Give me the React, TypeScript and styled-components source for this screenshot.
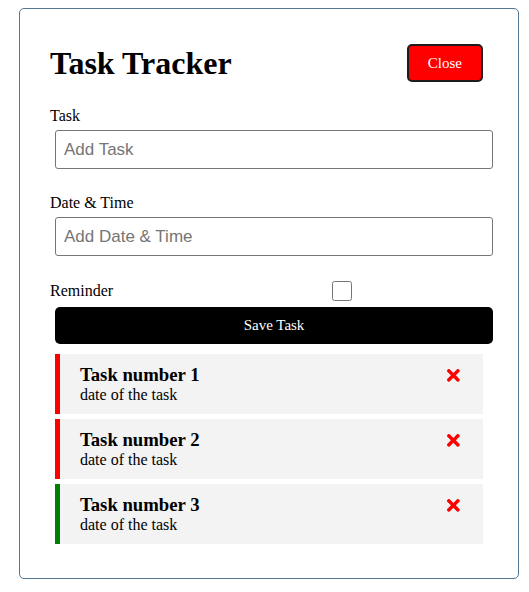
import { FC } from 'react'
import styled, { createGlobalStyle } from 'styled-components'
import { FaTimes } from 'react-icons/fa'

const GlobalStyle = createGlobalStyle`
    * {
        box-sizing: border-box;
        margin: 0;
        padding: 0;
    }

    body {
        font-family: "Liberation Serif", "Times New Roman", serif;
        color: #000;
        background: #fff;
    }
`;

const Container = styled.div`
    width: 500px;
    margin: 8px 0 0 19px;
    padding: 30px 30px 29px;
    border: 1px solid #557994;
    border-radius: 5px;
`;

const Header = styled.header`
    display: flex;
    justify-content: space-between;
    align-items: center;
    margin-bottom: 20px;
`;

const Title = styled.h1`
    font-size: 32px;
    font-weight: bold;
`;

const Button = styled.button<{ $color: string; $block?: boolean }>`
    display: ${({ $block }) => ($block ? 'block' : 'inline-block')};
    width: ${({ $block }) => ($block ? '100%' : 'auto')};
    height: ${({ $block }) => ($block ? '37px' : '38px')};
    margin: ${({ $block }) => ($block ? '6px 5px 5px' : '5px')};
    padding: 0 19px;
    background: ${({ $color }) => $color};
    color: #fff;
    border: ${({ $block }) => ($block ? 'none' : '2px solid #1c1c1c')};
    border-radius: 5px;
    font-family: inherit;
    font-size: 15px;
    cursor: pointer;
`;

const Form = styled.form`
    margin-bottom: 10px;
`;

const FormControl = styled.div`
    display: flex;
    flex-direction: column;
    margin: 20px 0;

    label {
        font-size: 16px;
        line-height: 18px;
    }
`;

const TextInput = styled.input`
    width: 100%;
    height: 39px;
    margin: 5px;
    padding: 3px 8px;
    border: 1px solid #767676;
    border-radius: 3px;
    font-family: "Liberation Sans", Arial, sans-serif;
    font-size: 17px;

    &::placeholder {
        color: #757575;
    }
`;

const CheckRow = styled.div`
    display: flex;
    align-items: center;
    justify-content: space-between;
    margin-top: 1px;

    label {
        flex: 1;
        font-size: 16px;
        line-height: 18px;
    }

    input {
        flex: 2;
        height: 20px;
    }
`;

const TaskItem = styled.div<{ $accent: string }>`
    background: #f3f3f3;
    margin: 5px;
    padding: 10px 20px;
    border-left: 5px solid ${({ $accent }) => $accent};
    cursor: pointer;
`;

const TaskTitle = styled.h3`
    display: flex;
    align-items: center;
    justify-content: space-between;
    font-size: 18.72px;
    line-height: 22px;

    svg {
        color: red;
    }
`;

const TaskDate = styled.p`
    font-size: 16px;
    line-height: 18px;
`;

const tasks = [
    { id: 1, text: 'Task number 1', day: 'date of the task', reminder: false },
    { id: 2, text: 'Task number 2', day: 'date of the task', reminder: false },
    { id: 3, text: 'Task number 3', day: 'date of the task', reminder: true },
];

const App: FC = () => {
    return (
        <>
            <GlobalStyle />
            <Container>
                <Header>
                    <Title>Task Tracker</Title>
                    <Button $color="red">Close</Button>
                </Header>
                <Form onSubmit={(e) => e.preventDefault()}>
                    <FormControl>
                        <label>Task</label>
                        <TextInput type="text" placeholder="Add Task" />
                    </FormControl>
                    <FormControl>
                        <label>Date &amp; Time</label>
                        <TextInput type="text" placeholder="Add Date &amp; Time" />
                    </FormControl>
                    <CheckRow>
                        <label>Reminder</label>
                        <input type="checkbox" />
                    </CheckRow>
                    <Button $color="#000" $block type="submit">Save Task</Button>
                </Form>
                {tasks.map((task) => (
                    <TaskItem key={task.id} $accent={task.reminder ? 'green' : 'red'}>
                        <TaskTitle>
                            {task.text}
                            <FaTimes />
                        </TaskTitle>
                        <TaskDate>{task.day}</TaskDate>
                    </TaskItem>
                ))}
            </Container>
        </>
    );
}

export default App;
